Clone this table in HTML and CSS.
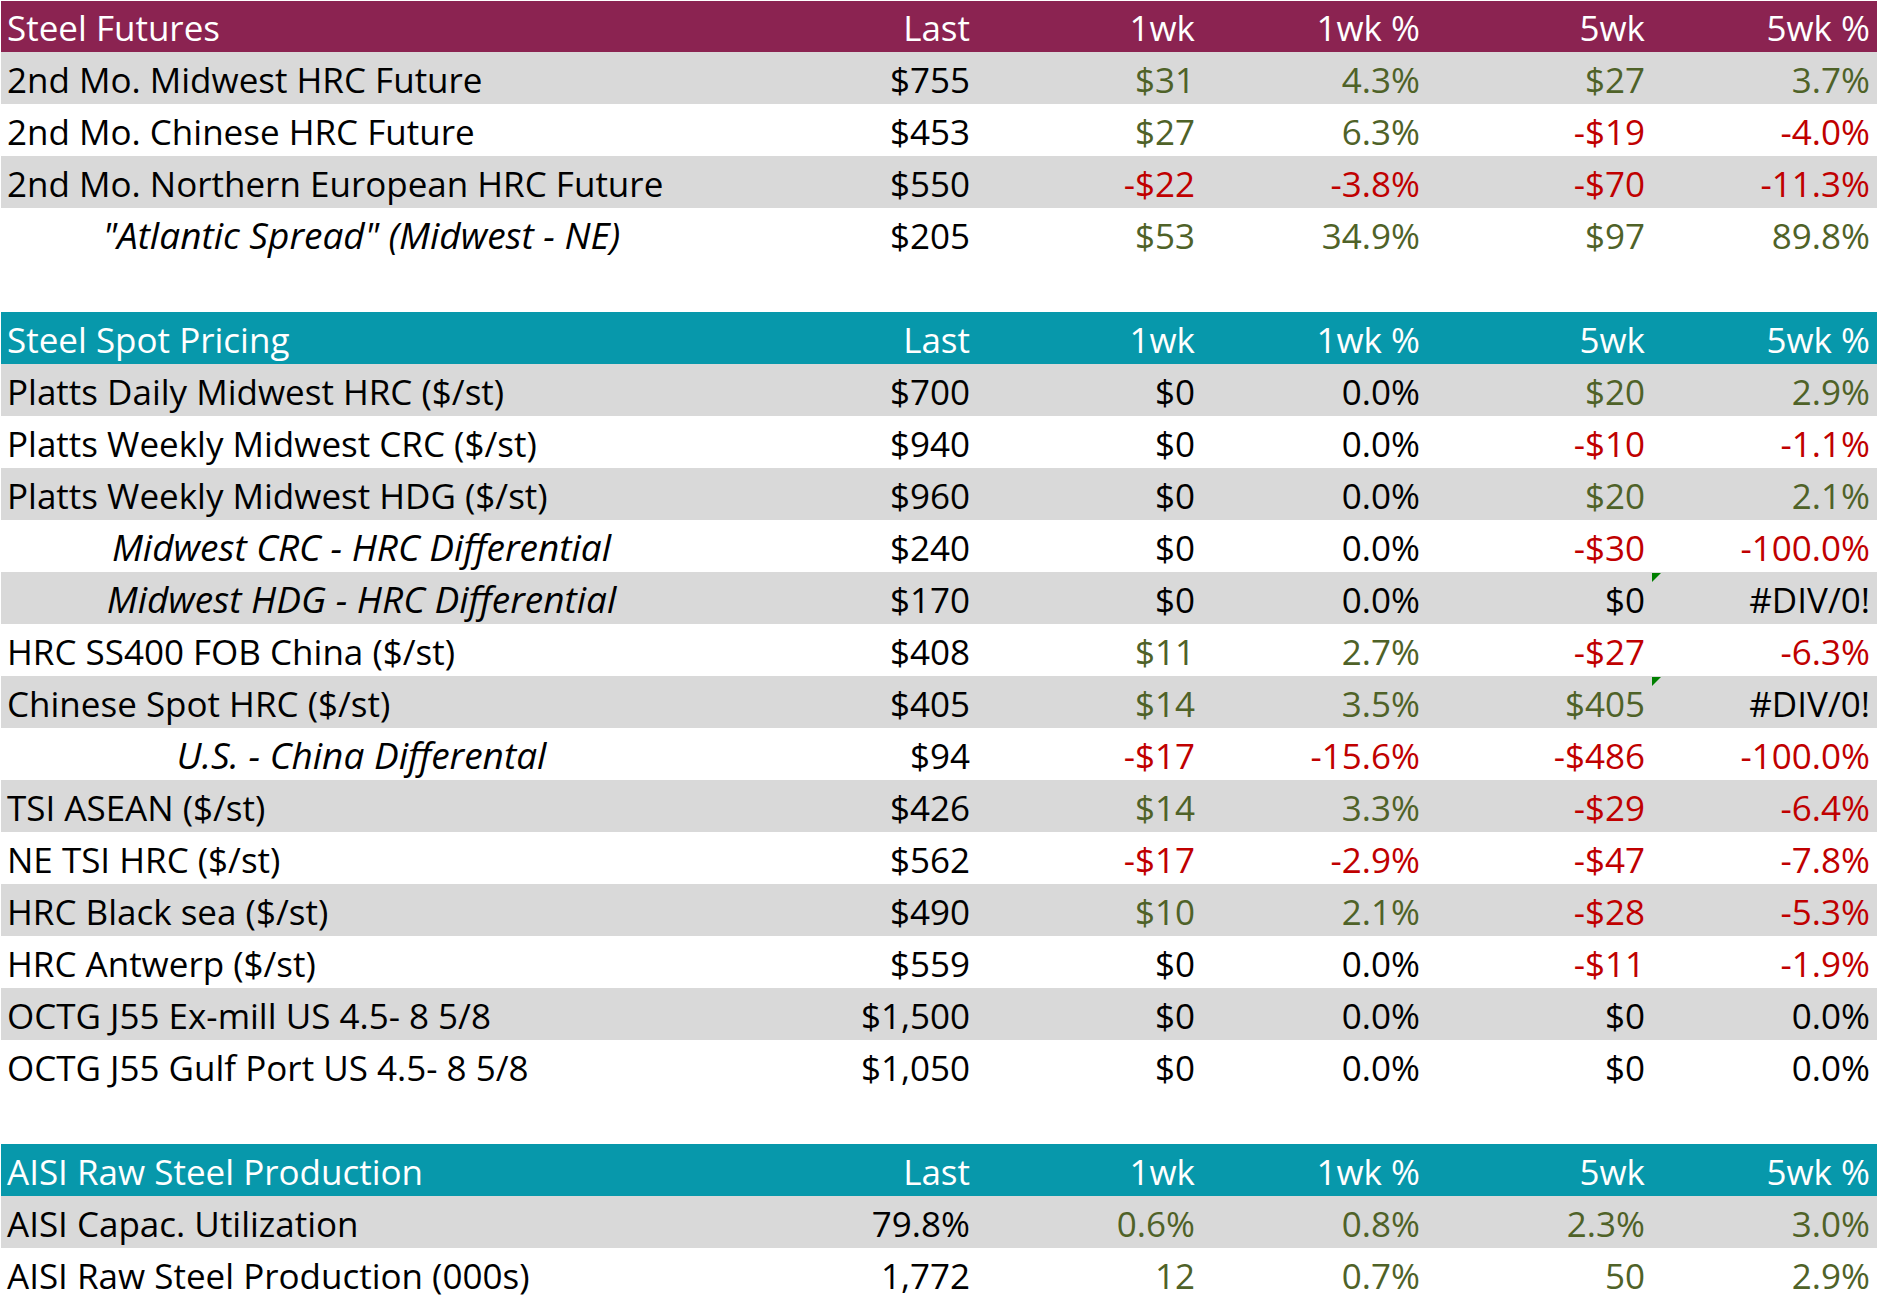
FILE: index.html
```html
<!DOCTYPE html>
<html lang="en">
<head>
<meta charset="utf-8">
<title>Steel Pricing</title>
<link rel="stylesheet" href="styles.css">
</head>
<body>
<div class="sheet">
  <div class="row hdr maroon"><div class="lbl">Steel Futures</div><div class="num">Last</div><div class="num">1wk</div><div class="num">1wk %</div><div class="num">5wk</div><div class="num">5wk %</div></div>
  <div class="row alt"><div class="lbl">2nd Mo. Midwest HRC Future</div><div class="num">$755</div><div class="num pos">$31</div><div class="num pos">4.3%</div><div class="num pos">$27</div><div class="num pos">3.7%</div></div>
  <div class="row"><div class="lbl">2nd Mo. Chinese HRC Future</div><div class="num">$453</div><div class="num pos">$27</div><div class="num pos">6.3%</div><div class="num neg">-$19</div><div class="num neg">-4.0%</div></div>
  <div class="row alt"><div class="lbl">2nd Mo. Northern European HRC Future</div><div class="num">$550</div><div class="num neg">-$22</div><div class="num neg">-3.8%</div><div class="num neg">-$70</div><div class="num neg">-11.3%</div></div>
  <div class="row"><div class="lbl ital">"Atlantic Spread" (Midwest - NE)</div><div class="num">$205</div><div class="num pos">$53</div><div class="num pos">34.9%</div><div class="num pos">$97</div><div class="num pos">89.8%</div></div>
  <div class="row blank"></div>

  <div class="row hdr teal"><div class="lbl">Steel Spot Pricing</div><div class="num">Last</div><div class="num">1wk</div><div class="num">1wk %</div><div class="num">5wk</div><div class="num">5wk %</div></div>
  <div class="row alt"><div class="lbl">Platts Daily Midwest HRC ($/st)</div><div class="num">$700</div><div class="num">$0</div><div class="num">0.0%</div><div class="num pos">$20</div><div class="num pos">2.9%</div></div>
  <div class="row"><div class="lbl">Platts Weekly Midwest CRC ($/st)</div><div class="num">$940</div><div class="num">$0</div><div class="num">0.0%</div><div class="num neg">-$10</div><div class="num neg">-1.1%</div></div>
  <div class="row alt"><div class="lbl">Platts Weekly Midwest HDG ($/st)</div><div class="num">$960</div><div class="num">$0</div><div class="num">0.0%</div><div class="num pos">$20</div><div class="num pos">2.1%</div></div>
  <div class="row"><div class="lbl ital">Midwest CRC - HRC Differential</div><div class="num">$240</div><div class="num">$0</div><div class="num">0.0%</div><div class="num neg">-$30</div><div class="num neg">-100.0%</div></div>
  <div class="row alt"><div class="lbl ital">Midwest HDG - HRC Differential</div><div class="num">$170</div><div class="num">$0</div><div class="num">0.0%</div><div class="num">$0</div><div class="num flag">#DIV/0!</div></div>
  <div class="row"><div class="lbl">HRC SS400 FOB China ($/st)</div><div class="num">$408</div><div class="num pos">$11</div><div class="num pos">2.7%</div><div class="num neg">-$27</div><div class="num neg">-6.3%</div></div>
  <div class="row alt"><div class="lbl">Chinese Spot HRC ($/st)</div><div class="num">$405</div><div class="num pos">$14</div><div class="num pos">3.5%</div><div class="num pos">$405</div><div class="num flag">#DIV/0!</div></div>
  <div class="row"><div class="lbl ital">U.S. - China Differental</div><div class="num">$94</div><div class="num neg">-$17</div><div class="num neg">-15.6%</div><div class="num neg">-$486</div><div class="num neg">-100.0%</div></div>
  <div class="row alt"><div class="lbl">TSI ASEAN ($/st)</div><div class="num">$426</div><div class="num pos">$14</div><div class="num pos">3.3%</div><div class="num neg">-$29</div><div class="num neg">-6.4%</div></div>
  <div class="row"><div class="lbl">NE TSI HRC ($/st)</div><div class="num">$562</div><div class="num neg">-$17</div><div class="num neg">-2.9%</div><div class="num neg">-$47</div><div class="num neg">-7.8%</div></div>
  <div class="row alt"><div class="lbl">HRC Black sea ($/st)</div><div class="num">$490</div><div class="num pos">$10</div><div class="num pos">2.1%</div><div class="num neg">-$28</div><div class="num neg">-5.3%</div></div>
  <div class="row"><div class="lbl">HRC Antwerp ($/st)</div><div class="num">$559</div><div class="num">$0</div><div class="num">0.0%</div><div class="num neg">-$11</div><div class="num neg">-1.9%</div></div>
  <div class="row alt"><div class="lbl">OCTG J55 Ex-mill US 4.5- 8 5/8</div><div class="num">$1,500</div><div class="num">$0</div><div class="num">0.0%</div><div class="num">$0</div><div class="num">0.0%</div></div>
  <div class="row"><div class="lbl">OCTG J55 Gulf Port US 4.5- 8 5/8</div><div class="num">$1,050</div><div class="num">$0</div><div class="num">0.0%</div><div class="num">$0</div><div class="num">0.0%</div></div>
  <div class="row blank"></div>

  <div class="row hdr teal"><div class="lbl">AISI Raw Steel Production</div><div class="num">Last</div><div class="num">1wk</div><div class="num">1wk %</div><div class="num">5wk</div><div class="num">5wk %</div></div>
  <div class="row alt"><div class="lbl">AISI Capac. Utilization</div><div class="num">79.8%</div><div class="num pos">0.6%</div><div class="num pos">0.8%</div><div class="num pos">2.3%</div><div class="num pos">3.0%</div></div>
  <div class="row"><div class="lbl">AISI Raw Steel Production (000s)</div><div class="num">1,772</div><div class="num pos">12</div><div class="num pos">0.7%</div><div class="num pos">50</div><div class="num pos">2.9%</div></div>
</div>
</body>
</html>
```

FILE: styles.css
```css
html, body {
  margin: 0;
  padding: 0;
  background: #ffffff;
}

body {
  font-family: "Open Sans", "Liberation Sans", sans-serif;
  font-size: 35px;
  color: #000000;
}

.sheet {
  padding: 1px 0 0 1px;
  display: flex;
  flex-direction: column;
}

.row {
  display: grid;
  grid-template-columns: 721px 255px 225px 225px 225px 225px;
  height: 52px;
  line-height: 55px;
  background: #ffffff;
  white-space: nowrap;
}

.row.alt {
  background: #d9d9d9;
}

.row.hdr {
  color: #ffffff;
}

.row.maroon {
  background: #8b2351;
  height: 51px;
  line-height: 53px;
}

.row.teal {
  background: #0798ab;
}

.lbl {
  padding-left: 6px;
}

.lbl.ital {
  font-style: italic;
  font-size: 37px;
  line-height: 53px;
  text-align: center;
  padding-left: 0;
}

.num {
  text-align: right;
  padding-right: 7px;
  position: relative;
}

.pos {
  color: #4f6228;
}

.neg {
  color: #c00000;
}

.flag::before {
  content: "";
  position: absolute;
  left: 0;
  top: 1px;
  width: 0;
  height: 0;
  border-top: 9px solid #008000;
  border-right: 9px solid transparent;
}
```
